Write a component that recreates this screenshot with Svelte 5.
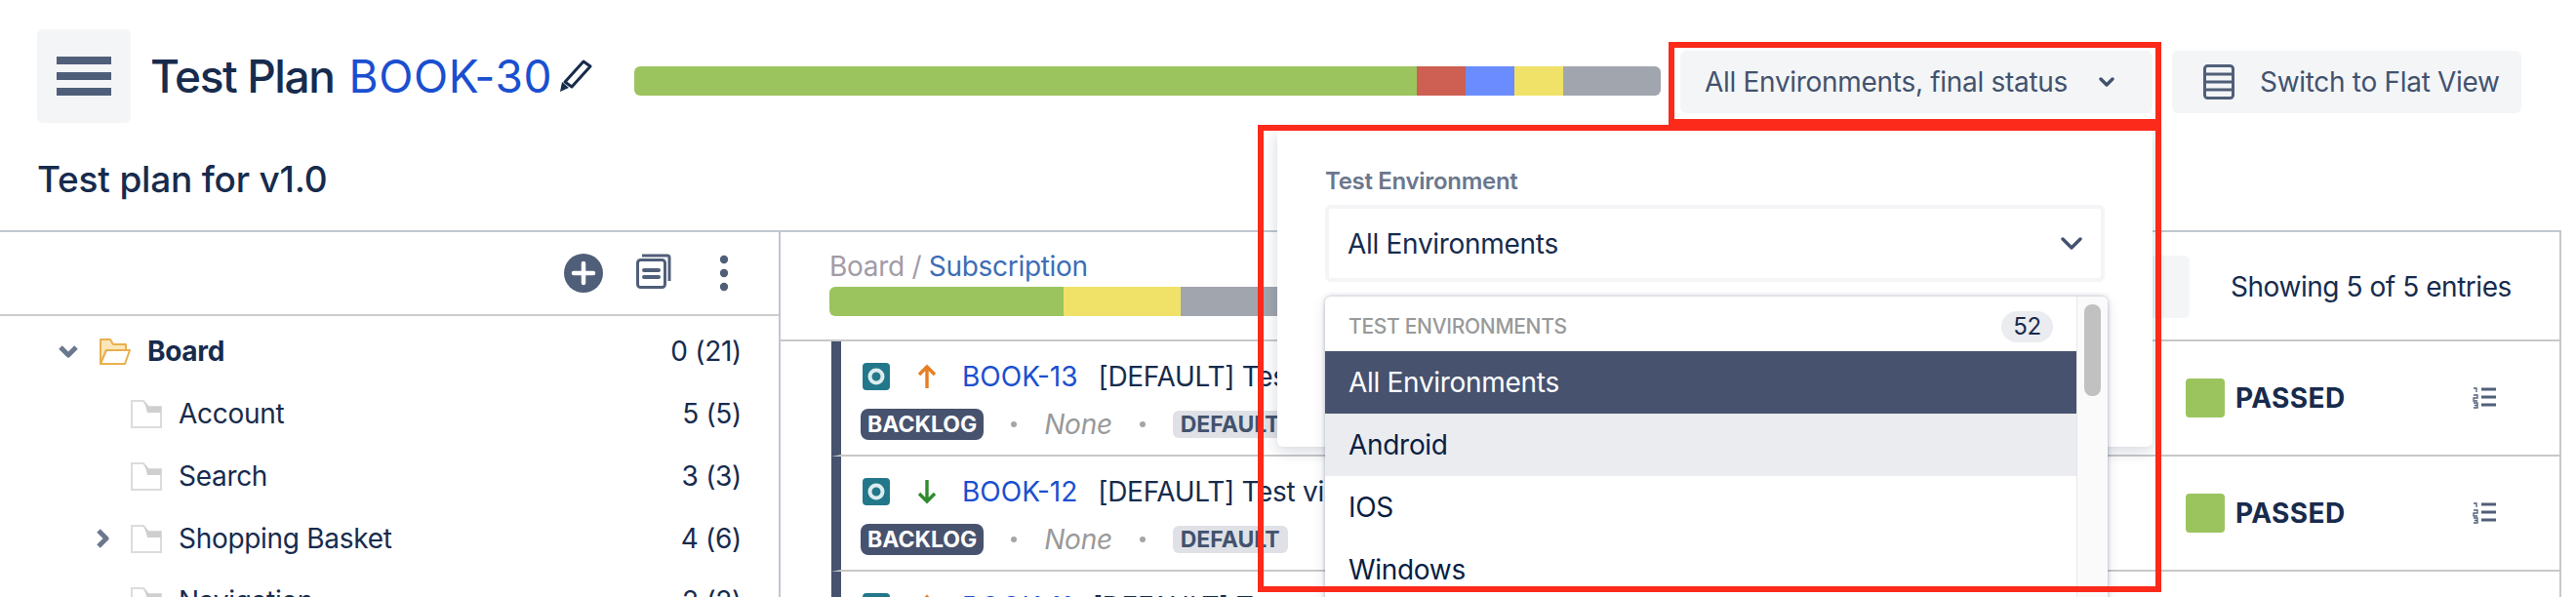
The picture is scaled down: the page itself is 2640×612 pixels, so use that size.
<script>
  const segments = [
    { color: '#9bc45f', width: 802 },
    { color: '#cd5f53', width: 50 },
    { color: '#6b8cff', width: 50 },
    { color: '#f0e268', width: 50 },
    { color: '#a1a5ae', width: 100 }
  ];
  const folderBar = [
    { color: '#9bc45f', width: 240 },
    { color: '#f0e268', width: 120 },
    { color: '#a1a5ae', width: 440 }
  ];
  const tree = [
    { name: 'Board', count: '0 (21)', open: true, root: true },
    { name: 'Account', count: '5 (5)' },
    { name: 'Search', count: '3 (3)' },
    { name: 'Shopping Basket', count: '4 (6)', closed: true },
    { name: 'Navigation', count: '2 (2)' }
  ];
  const rows = [
    { key: 'BOOK-13', title: '[DEFAULT] Test checkout flow', up: true },
    { key: 'BOOK-12', title: '[DEFAULT] Test visibility of items', up: false },
    { key: 'BOOK-11', title: '[DEFAULT] Test search', up: true }
  ];
  const envs = ['All Environments', 'Android', 'IOS', 'Windows'];
</script>

<div class="page">
  <header>
    <div class="top">
      <button class="menu" aria-label="menu"><span></span><span></span><span></span></button>
      <div class="title">
        <h1>Test Plan</h1>
        <a href="#book">BOOK-30</a>
        <svg class="pencil" width="34" height="34" viewBox="0 0 34 34">
          <path d="M25 2 L32 7 L13 28 L6 23 Z" fill="none" stroke="#172b4d" stroke-width="3" stroke-linejoin="round"/>
          <path d="M3 23 L10 29 L1 33 Z" fill="#172b4d"/>
        </svg>
      </div>
      <div class="bar top-bar">
        {#each segments as s}<i style="width:{s.width}px;background:{s.color}"></i>{/each}
      </div>
      <button class="env-btn">
        All Environments, final status
        <svg width="16" height="10" viewBox="0 0 16 10"><path d="M2 2 L8 8 L14 2" fill="none" stroke="#42526e" stroke-width="3.4" stroke-linecap="round" stroke-linejoin="round"/></svg>
      </button>
      <button class="flat-btn">
        <svg width="32" height="36" viewBox="0 0 32 36">
          <rect x="1.5" y="1.5" width="29" height="33" rx="3" fill="none" stroke="#505f79" stroke-width="3"/>
          <path d="M2 10h28M2 18h28M2 26h28" stroke="#505f79" stroke-width="3"/>
        </svg>
        Switch to Flat View
      </button>
    </div>
    <h2>Test plan for v1.0</h2>
  </header>

  <div class="body">
    <aside>
      <div class="tools">
        <svg width="40" height="40" viewBox="0 0 40 40">
          <circle cx="20" cy="20" r="20" fill="#505f79"/>
          <path d="M20 10v20M10 20h20" stroke="#fff" stroke-width="4.5" stroke-linecap="round"/>
        </svg>
        <svg width="36" height="36" viewBox="0 0 36 36">
          <path d="M6 2h26a2 2 0 0 1 2 2v24" fill="none" stroke="#505f79" stroke-width="3"/>
          <rect x="1.5" y="6.500" width="28" height="28" rx="3" fill="#fff" stroke="#505f79" stroke-width="3"/>
          <path d="M8 17h15M8 24h15" stroke="#505f79" stroke-width="4" stroke-linecap="round"/>
        </svg>
        <svg class="kebab" width="10" height="38" viewBox="0 0 10 38">
          <circle cx="5" cy="5" r="4.200" fill="#505f79"/><circle cx="5" cy="19" r="4.200" fill="#505f79"/><circle cx="5" cy="33" r="4.200" fill="#505f79"/>
        </svg>
      </div>
      <ul class="tree">
        {#each tree as n}
          <li class:root={n.root}>
            <span class="twist">
              {#if n.open}
                <svg width="22" height="14" viewBox="0 0 22 14"><path d="M3 3 L11 11 L19 3" fill="none" stroke="#6b778c" stroke-width="5" stroke-linejoin="round"/></svg>
              {:else if n.closed}
                <svg width="14" height="20" viewBox="0 0 14 20"><path d="M3 2 L11 10 L3 18" fill="none" stroke="#6b778c" stroke-width="5" stroke-linejoin="round"/></svg>
              {/if}
            </span>
            {#if n.root}
              <svg class="ficon" width="32" height="27" viewBox="0 0 32 27">
                <path d="M1 26V1h10l3 5h13v6H7L1 26Z" fill="#fbe6b8" stroke="#e8b04e" stroke-width="2" stroke-linejoin="round"/>
                <path d="M7 12h24l-5 14H1Z" fill="#fff" stroke="#e8b04e" stroke-width="2" stroke-linejoin="round"/>
              </svg>
            {:else}
              <svg class="ficon" width="32" height="29" viewBox="0 0 32 29">
                <path d="M1 28V1h12l4 6h14v21Z" fill="#fff" stroke="#dcdcdc" stroke-width="2"/>
                <path d="M14 1l5 6h12v6H17Z" fill="#cfcfcf"/>
              </svg>
            {/if}
            <span class="name">{n.name}</span>
            <span class="count">{n.count}</span>
          </li>
        {/each}
      </ul>
    </aside>

    <main>
      <div class="main-head">
        <div class="crumbs">
          <div class="path"><span>Board /</span> <a href="#sub">Subscription</a></div>
          <div class="bar folder-bar">
            {#each folderBar as s}<i style="width:{s.width}px;background:{s.color}"></i>{/each}
          </div>
        </div>
        <div class="search"></div>
        <div class="showing">Showing 5 of 5 entries</div>
      </div>

      {#each rows as r}
        <div class="row">
          <div class="info">
            <div class="line">
              <svg class="type" width="28" height="28" viewBox="0 0 28 28">
                <rect width="28" height="28" rx="4" fill="#22788a"/>
                <circle cx="14" cy="14" r="6.500" fill="none" stroke="#dcecef" stroke-width="4"/>
              </svg>
              {#if r.up}
                <svg class="arrow" width="20" height="26" viewBox="0 0 20 26"><path d="M10 25V3M2 11l8-8 8 8" fill="none" stroke="#e67e22" stroke-width="3.400"/></svg>
              {:else}
                <svg class="arrow" width="20" height="26" viewBox="0 0 20 26"><path d="M10 1v22M2 15l8 8 8-8" fill="none" stroke="#2e8b2e" stroke-width="3.400"/></svg>
              {/if}
              <a href="#key">{r.key}</a>
              <span class="issue">{r.title}</span>
            </div>
            <div class="line meta">
              <span class="status-tag">BACKLOG</span>
              <span class="dot"></span>
              <em>None</em>
              <span class="dot"></span>
              <span class="default-tag">DEFAULT</span>
            </div>
          </div>
          <div class="result">
            <span class="square"></span>
            <strong>PASSED</strong>
          </div>
          <svg class="steps" width="24" height="22" viewBox="0 0 24 22">
            <path d="M9 2h15M9 10h15M9 18h15" stroke="#505f79" stroke-width="3"/>
            <path d="M1 1h3v4M1 8h4v3H1v3h4M1 16h4v5H1M2 18.500h3" fill="none" stroke="#505f79" stroke-width="1.300"/>
          </svg>
        </div>
      {/each}
    </main>
  </div>

  <div class="panel">
    <label for="env">Test Environment</label>
    <div class="select" id="env">
      All Environments
      <svg width="22" height="14" viewBox="0 0 22 14"><path d="M2 2 L11 11 L20 2" fill="none" stroke="#42526e" stroke-width="3.400" stroke-linecap="round" stroke-linejoin="round"/></svg>
    </div>
  </div>

  <div class="list">
    <div class="options">
      <div class="list-head">
        <span>TEST ENVIRONMENTS</span>
        <b>52</b>
      </div>
      {#each envs as env, i}
        <div class="opt" class:selected={i === 0} class:hover={i === 1}>{env}</div>
      {/each}
    </div>
    <div class="track"><div class="thumb"></div></div>
  </div>

  <div class="mark mark-btn"></div>
  <div class="mark mark-panel"></div>
</div>

<style>
  :global(body) {
    margin: 0;
    background: #fff;
  }

  .page {
    position: relative;
    width: 2640px;
    height: 612px;
    overflow: hidden;
    font-family: Inter, "Liberation Sans", sans-serif;
    font-size: 28px;
    letter-spacing: -0.3px;
    color: #172b4d;
  }

  header {
    box-sizing: border-box;
    padding: 30px 0 0 38px;
    border-bottom: 2px solid #c1c7d0;
    width: 2625px;
    height: 238px;
  }

  .top {
    display: flex;
    align-items: flex-start;
  }

  button {
    border: 0;
    font: inherit;
    letter-spacing: inherit;
    padding: 0;
  }

  .menu {
    width: 96px;
    height: 96px;
    background: #f4f5f7;
    border-radius: 6px;
    display: flex;
    flex-direction: column;
    align-items: center;
    justify-content: center;
    gap: 8px;
  }

  .menu span {
    width: 56px;
    height: 8px;
    background: #505f79;
  }

  .title {
    width: 495px;
    margin-left: 21px;
    display: flex;
    align-items: center;
    height: 96px;
    font-size: 46px;
  }

  h1 {
    margin: 0;
    margin-left: -1px;
    font: inherit;
    font-weight: 500;
    letter-spacing: -1.4px;
  }

  .title a {
    margin-left: 15px;
    color: #1a4fd0;
    text-decoration: none;
    font-weight: 400;
    letter-spacing: 0.6px;
  }

  .pencil {
    margin-left: 7px;
  }

  .bar {
    display: flex;
    overflow: hidden;
    height: 30px;
    border-radius: 6px;
  }

  .bar i {
    display: block;
    height: 100%;
  }

  .top-bar {
    width: 1052px;
    margin-top: 38px;
  }

  .env-btn,
  .flat-btn {
    height: 64px;
    margin-top: 22px;
    margin-left: 20px;
    background: #f4f5f7;
    border-radius: 6px;
    color: #42526e;
    display: flex;
    align-items: center;
  }

  .env-btn {
    width: 484px;
    padding-left: 25px;
    box-sizing: border-box;
    gap: 32px;
  }

  .flat-btn {
    width: 358px;
    padding-left: 32px;
    box-sizing: border-box;
    gap: 26px;
  }

  h2 {
    margin: 36px 0 0;
    font-size: 37px;
    font-weight: 500;
    letter-spacing: -0.2px;
    line-height: 44px;
  }

  .body {
    display: flex;
    width: 2625px;
    height: 374px;
  }

  aside {
    width: 800px;
    box-sizing: border-box;
    border-right: 2px solid #c1c7d0;
    flex: none;
  }

  .tools {
    height: 86px;
    box-sizing: border-box;
    border-bottom: 2px solid #ccc;
    display: flex;
    align-items: flex-start;
    justify-content: flex-end;
    gap: 34px;
    padding: 22px 51px 0 0;
  }

  .kebab {
    margin-left: 15px;
    margin-top: 1px;
  }

  .tree {
    list-style: none;
    margin: 4px 0 0;
    padding: 0 38px 0 134px;
  }

  .tree li {
    height: 64px;
    display: flex;
    align-items: center;
    position: relative;
  }

  .tree li.root {
    margin-left: -32px;
  }

  .twist {
    position: absolute;
    right: 100%;
    margin-right: 22px;
    display: flex;
  }

  .root .twist {
    margin-right: 21px;
  }

  .ficon {
    margin-right: 17px;
    flex: none;
  }

  .root .name {
    font-weight: 700;
  }

  .count {
    margin-left: auto;
  }

  main {
    flex: 1;
    min-width: 0;
    border-right: 2px solid #c8c8c8;
  }

  .main-head {
    height: 112px;
    box-sizing: border-box;
    border-bottom: 2px solid #c8c8c8;
    padding-left: 50px;
    display: flex;
    align-items: flex-start;
  }

  .crumbs {
    width: 800px;
    padding-top: 15px;
  }

  .path {
    line-height: 40px;
    color: #a29ba7;
  }

  .path a {
    color: #3d6db5;
    text-decoration: none;
  }

  .folder-bar {
    margin-top: 1px;
  }

  .search {
    width: 300px;
    height: 64px;
    margin: 24px 0 0 294px;
    background: #f4f5f7;
    border-radius: 6px;
  }

  .showing {
    margin: 38px 0 0 42px;
    line-height: 36px;
    letter-spacing: -0.45px;
    white-space: nowrap;
  }

  .row {
    height: 118px;
    box-sizing: border-box;
    margin-left: 52px;
    border-left: 10px solid #47526e;
    border-bottom: 2px solid #c8c8c8;
    display: flex;
    align-items: center;
  }

  .info {
    width: 1378px;
    padding: 4px 0 0 20px;
    box-sizing: border-box;
    flex: none;
  }

  .line {
    display: flex;
    align-items: center;
    height: 36px;
    white-space: nowrap;
  }

  .type {
    margin-left: 2px;
  }

  .arrow {
    margin-left: 28px;
  }

  .line a {
    margin-left: 26px;
    color: #1a4fd0;
    text-decoration: none;
    letter-spacing: 0;
  }

  .issue {
    margin-left: 21px;
  }

  .meta {
    margin-top: 13px;
  }

  .status-tag,
  .default-tag {
    font-size: 23px;
    font-weight: 700;
    line-height: 28px;
    letter-spacing: 0;
  }

  .status-tag {
    background: #47526e;
    color: #fff;
    border-radius: 8px;
    padding: 2px 7px;
  }

  .default-tag {
    background: #dfe1e6;
    color: #42526e;
    border-radius: 6px;
    padding: 0 8px;
  }

  .dot {
    width: 6px;
    height: 6px;
    border-radius: 50%;
    background: #a5a5a5;
    margin: 0 28px;
  }

  em {
    color: #999;
  }

  .result {
    display: flex;
    align-items: center;
    gap: 11px;
    width: 294px;
    flex: none;
  }

  .square {
    width: 40px;
    height: 40px;
    background: #9bc45f;
    border-radius: 4px;
  }

  .result strong {
    font-weight: 700;
    letter-spacing: 0.4px;
  }

  .panel {
    position: absolute;
    left: 1309px;
    top: 133px;
    width: 897px;
    height: 325px;
    box-sizing: border-box;
    background: #fff;
    border-radius: 0 0 6px 6px;
    box-shadow: 0 4px 16px rgba(9, 30, 66, 0.18);
    padding: 38px 49px 0;
  }

  .panel label {
    display: block;
    font-size: 24px;
    font-weight: 600;
    color: #6b778c;
    line-height: 30px;
    margin-bottom: 9px;
  }

  .select {
    height: 79px;
    box-sizing: border-box;
    border: 4px solid #f4f5f7;
    border-radius: 6px;
    padding: 0 19px;
    display: flex;
    align-items: center;
    justify-content: space-between;
  }

  .list {
    position: absolute;
    left: 1358px;
    top: 304px;
    width: 802px;
    height: 320px;
    box-sizing: border-box;
    background: #fff;
    border-radius: 6px 6px 0 0;
    box-shadow: 0 0 4px rgba(9, 30, 66, 0.3), 0 4px 14px rgba(9, 30, 66, 0.12);
    display: flex;
    overflow: hidden;
  }

  .options {
    flex: 1;
  }

  .list-head {
    height: 56px;
    padding: 5px 24px 0 24px;
    box-sizing: border-box;
    display: flex;
    align-items: center;
    justify-content: space-between;
    font-size: 21px;
    font-weight: 500;
    color: #999;
  }

  .list-head b {
    font-weight: 400;
    font-size: 24px;
    color: #172b4d;
    background: #ebecf0;
    border-radius: 16px;
    width: 53px;
    height: 32px;
    line-height: 32px;
    text-align: center;
  }

  .opt {
    height: 64px;
    line-height: 64px;
    padding-left: 24px;
    color: #091e42;
  }

  .opt.selected {
    background: #47526e;
    color: #fff;
  }

  .opt.hover {
    background: #ebecf0;
  }

  .track {
    width: 32px;
    flex: none;
    box-sizing: border-box;
    border-left: 1px solid #e8e8e8;
    background: #fafafa;
    padding: 8px 7px 0;
  }

  .thumb {
    height: 94px;
    background: #c1c1c1;
    border-radius: 8px;
  }

  .mark {
    position: absolute;
    box-sizing: border-box;
    border: 6px solid #fb2a1a;
    pointer-events: none;
  }

  .mark-btn {
    left: 1710px;
    top: 43px;
    width: 505px;
    height: 85px;
  }

  .mark-panel {
    left: 1289px;
    top: 128px;
    width: 926px;
    height: 479px;
  }
</style>
